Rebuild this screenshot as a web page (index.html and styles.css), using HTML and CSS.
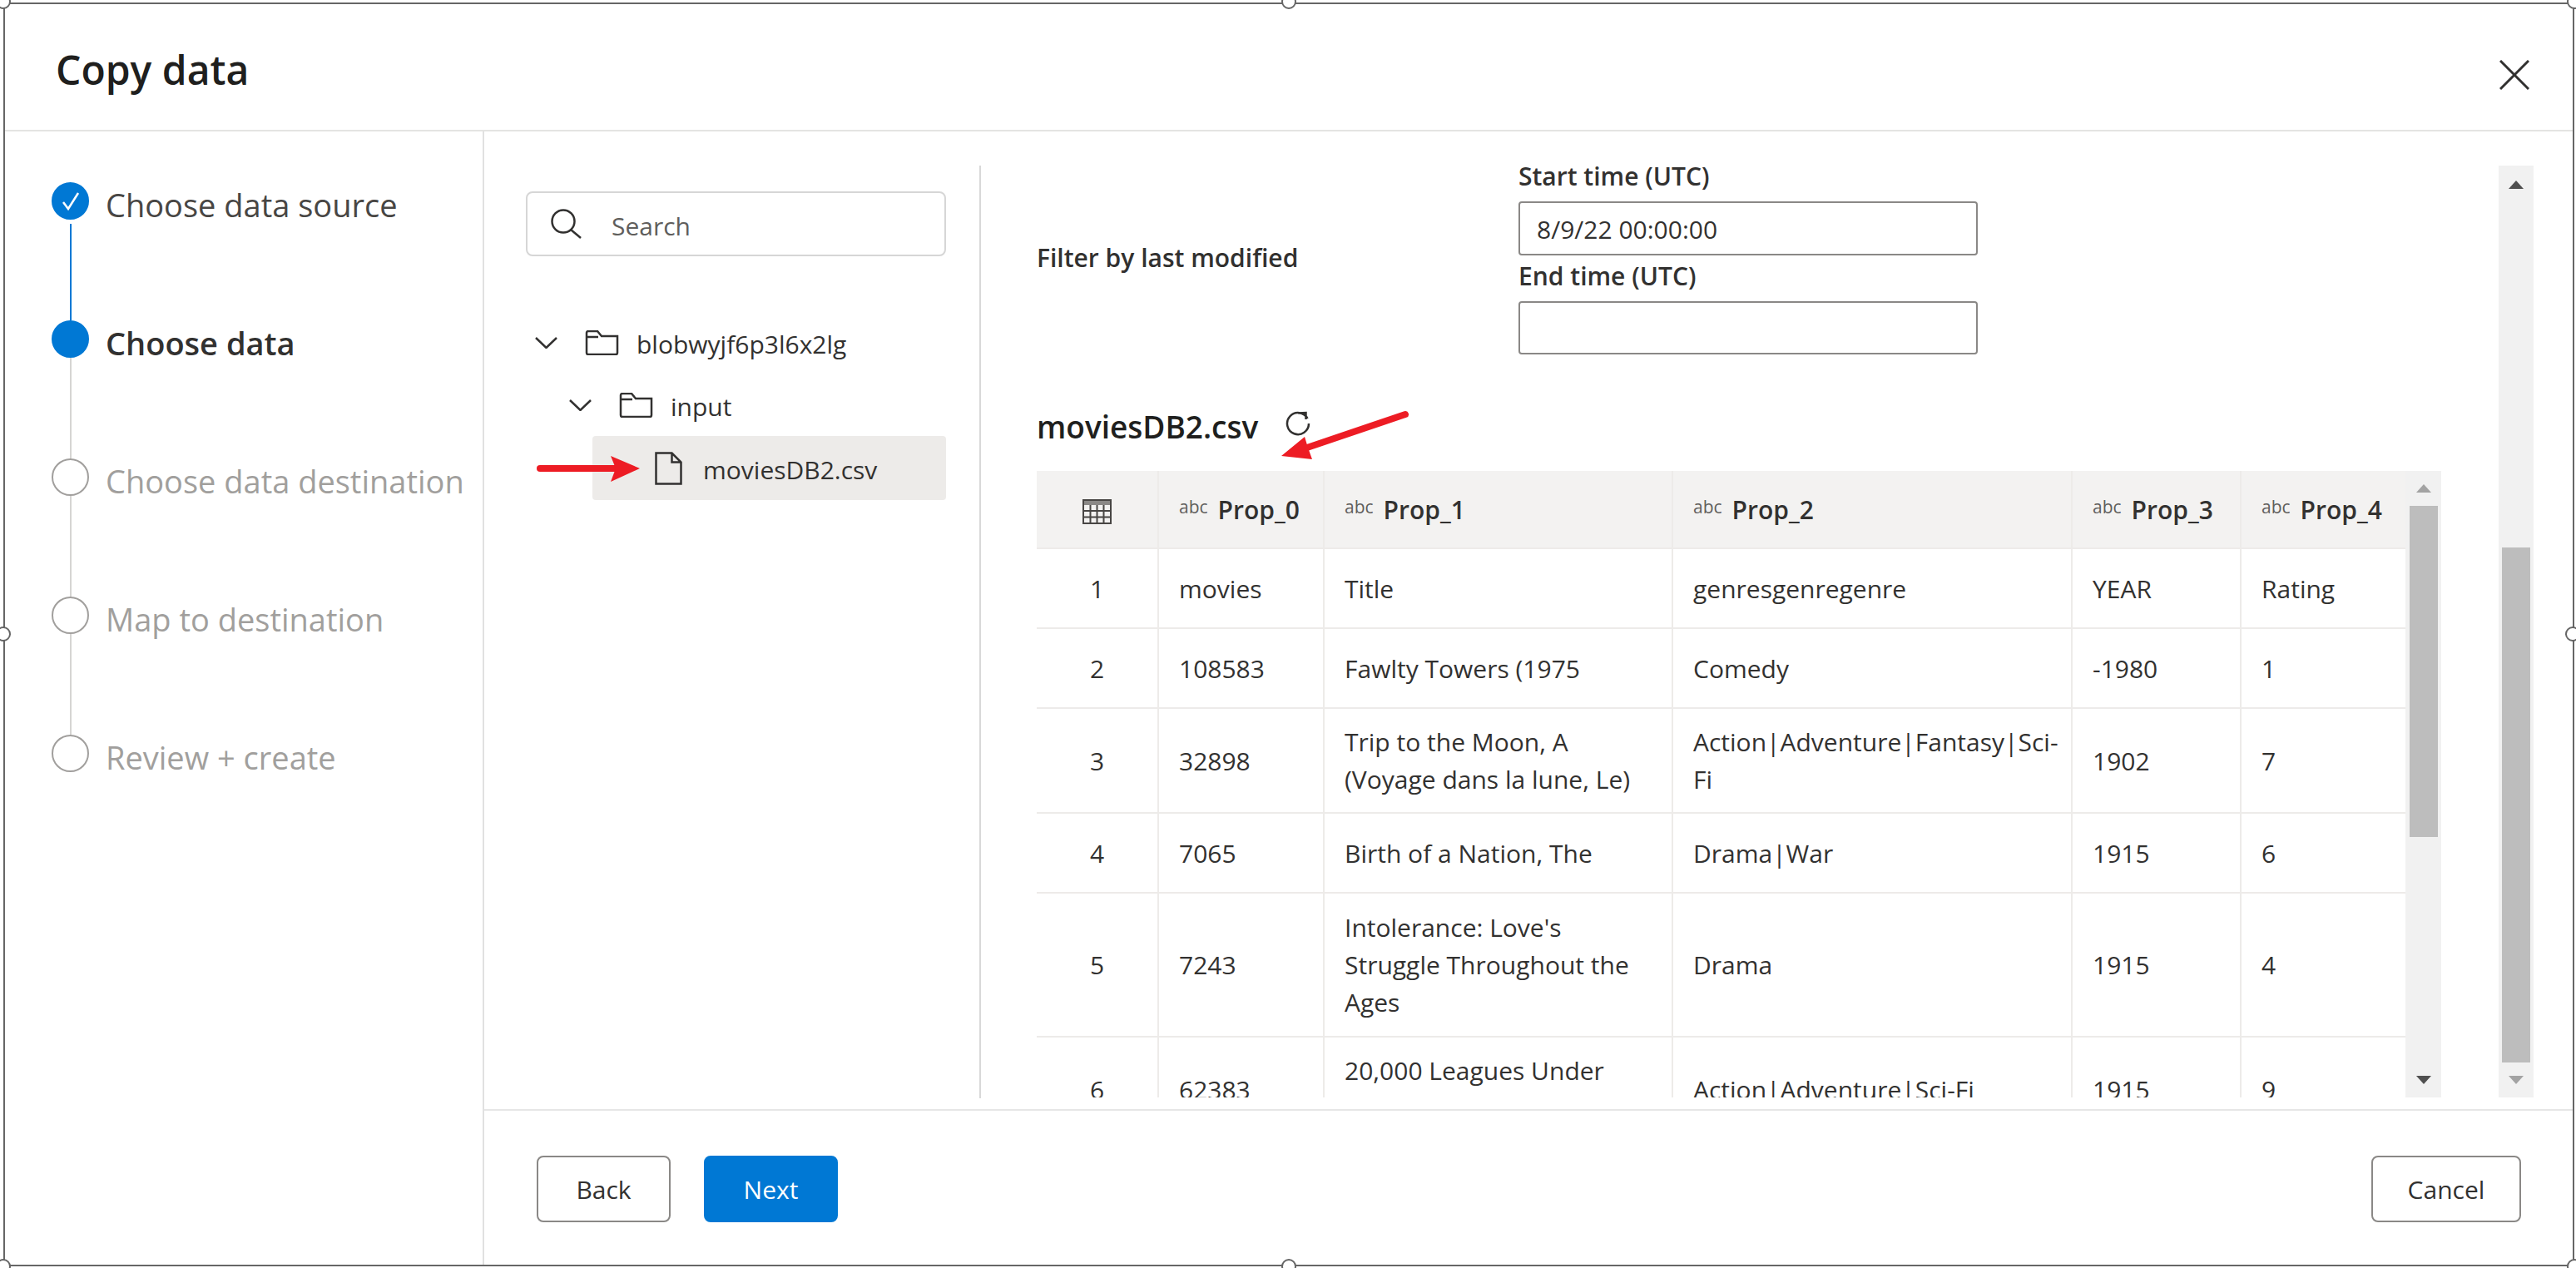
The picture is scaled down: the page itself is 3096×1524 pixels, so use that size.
FILE: index.html
```html
<!DOCTYPE html>
<html>
  <head>
    <meta charset="UTF-8">
    <title>Copy data</title>
    <link rel="stylesheet" href="styles.css">
  </head>
  <body>
    <div class="dialog">
      <div class="dialog-header">
        <h1>Copy data</h1>
        <svg class="close-icon" viewBox="0 0 36 36"><path d="M1 1L35 35M35 1L1 35"/></svg>
      </div>

      <div class="dialog-body">
        <!-- Steps -->
        <div class="steps">
          <div class="step done">
            <div class="step-marker">
              <div class="step-circle">
                <svg viewBox="0 0 45 45"><path d="M14 24L20 32L32 13"/></svg>
              </div>
              <div class="step-line"></div>
            </div>
            <div class="step-label">Choose data source</div>
          </div>
          <div class="step current">
            <div class="step-marker">
              <div class="step-circle"></div>
              <div class="step-line"></div>
            </div>
            <div class="step-label">Choose data</div>
          </div>
          <div class="step">
            <div class="step-marker">
              <div class="step-circle"></div>
              <div class="step-line"></div>
            </div>
            <div class="step-label">Choose data destination</div>
          </div>
          <div class="step">
            <div class="step-marker">
              <div class="step-circle"></div>
              <div class="step-line"></div>
            </div>
            <div class="step-label">Map to destination</div>
          </div>
          <div class="step">
            <div class="step-marker">
              <div class="step-circle"></div>
            </div>
            <div class="step-label">Review + create</div>
          </div>
        </div>

        <div class="main">
          <div class="content">
            <!-- Tree -->
            <div class="tree-pane">
              <div class="search-box">
                <svg class="search-icon" viewBox="0 0 38 36"><circle cx="16" cy="15" r="13.5"/><path d="M25 25L37 35"/></svg>
                <span>Search</span>
              </div>
              <div class="tree">
                <div class="tree-row">
                  <svg class="chevron" viewBox="0 0 27 14"><path d="M1 1L13.5 13L26 1"/></svg>
                  <svg class="folder" viewBox="0 0 41 30"><path d="M2 27V3a2 2 0 0 1 2-2h11l5 6h19v20a2 2 0 0 1-2 2H4a2 2 0 0 1-2-2zM2 8h14"/></svg>
                  <span>blobwyjf6p3l6x2lg</span>
                </div>
                <div class="tree-row nested">
                  <svg class="chevron" viewBox="0 0 27 14"><path d="M1 1L13.5 13L26 1"/></svg>
                  <svg class="folder" viewBox="0 0 41 30"><path d="M2 27V3a2 2 0 0 1 2-2h11l5 6h19v20a2 2 0 0 1-2 2H4a2 2 0 0 1-2-2zM2 8h14"/></svg>
                  <span>input</span>
                </div>
                <div class="tree-row selected">
                  <svg class="file" viewBox="0 0 33 40"><path d="M1.5 1.5h19l11 11v26h-30zM20.5 1.5v11h11"/></svg>
                  <span>moviesDB2.csv</span>
                </div>
              </div>
            </div>

            <!-- Preview -->
            <div class="preview">
              <div class="filter-row">
                <div class="filter-label">Filter by last modified</div>
                <div class="filter-fields">
                  <label>Start time (UTC)</label>
                  <div class="text-field">8/9/22 00:00:00</div>
                  <label>End time (UTC)</label>
                  <div class="text-field"></div>
                </div>
              </div>

              <div class="file-title">
                <h2>moviesDB2.csv</h2>
                <svg class="refresh-icon" viewBox="0 0 30 30"><path d="M26.5 9A13 13 0 1 0 28 15M15 2.5L24.5 2V10"/></svg>
              </div>

              <div class="table-area">
                <div class="table-wrap">
                  <table>
                    <colgroup>
                      <col class="col-index">
                      <col class="col-0">
                      <col class="col-1">
                      <col class="col-2">
                      <col class="col-3">
                      <col class="col-4">
                    </colgroup>
                    <thead>
                      <tr>
                        <th class="index">
                          <svg class="table-icon" viewBox="0 0 35 30"><path class="table-band" d="M1 1h33v6H1z"/><path d="M1 1h33v28H1zM1 14h33M1 21.500h33M9.500 7v22M17.500 7v22M25.500 7v22"/></svg>
                        </th>
                        <th><span class="type">abc</span>Prop_0</th>
                        <th><span class="type">abc</span>Prop_1</th>
                        <th><span class="type">abc</span>Prop_2</th>
                        <th><span class="type">abc</span>Prop_3</th>
                        <th><span class="type">abc</span>Prop_4</th>
                      </tr>
                    </thead>
                    <tbody>
                      <tr class="row-short">
                        <td class="index">1</td><td>movies</td><td>Title</td><td>genresgenregenre</td><td>YEAR</td><td>Rating</td>
                      </tr>
                      <tr class="row-short">
                        <td class="index">2</td><td>108583</td><td>Fawlty Towers (1975</td><td>Comedy</td><td>-1980</td><td>1</td>
                      </tr>
                      <tr class="row-double">
                        <td class="index">3</td><td>32898</td><td>Trip to the Moon, A<br>(Voyage dans la lune, Le)</td><td>Action|Adventure|Fantasy|Sci-<br>Fi</td><td>1902</td><td>7</td>
                      </tr>
                      <tr class="row-short">
                        <td class="index">4</td><td>7065</td><td>Birth of a Nation, The</td><td>Drama|War</td><td>1915</td><td>6</td>
                      </tr>
                      <tr class="row-triple">
                        <td class="index">5</td><td>7243</td><td>Intolerance: Love's<br>Struggle Throughout the<br>Ages</td><td>Drama</td><td>1915</td><td>4</td>
                      </tr>
                      <tr class="row-double">
                        <td class="index">6</td><td>62383</td><td>20,000 Leagues Under<br>the Sea</td><td>Action|Adventure|Sci-Fi</td><td>1915</td><td>9</td>
                      </tr>
                    </tbody>
                  </table>
                </div>
                <div class="scrollbar inner">
                  <div class="scroll-btn"><div class="arrow-up faded"></div></div>
                  <div class="scroll-thumb"></div>
                  <div class="scroll-space"></div>
                  <div class="scroll-btn"><div class="arrow-down"></div></div>
                </div>
              </div>
            </div>

            <div class="scrollbar outer">
              <div class="scroll-btn"><div class="arrow-up"></div></div>
              <div class="scroll-thumb"></div>
              <div class="scroll-btn"><div class="arrow-down faded"></div></div>
            </div>
          </div>

          <div class="dialog-footer">
            <button class="btn">Back</button>
            <button class="btn primary">Next</button>
            <button class="btn cancel">Cancel</button>
          </div>
        </div>
      </div>
    </div>

    <!-- Annotations and resize handles drawn over the dialog -->
    <svg class="overlay" viewBox="0 0 3096 1524">
      <path class="arrow-shaft" d="M649 563H740"/>
      <path class="arrow-head" d="M734 548L769 563L734 579L740 563z"/>
      <path class="arrow-shaft" d="M1689 498L1568 539"/>
      <path class="arrow-head" d="M1568 525L1540 548L1577 552L1572 538z"/>
      <circle class="handle" cx="4" cy="2" r="8"/>
      <circle class="handle" cx="1549" cy="2" r="8"/>
      <circle class="handle" cx="3094" cy="2" r="8"/>
      <circle class="handle" cx="4" cy="762" r="8"/>
      <circle class="handle" cx="3092" cy="762" r="8"/>
      <circle class="handle" cx="4" cy="1522" r="8"/>
      <circle class="handle" cx="1549" cy="1522" r="8"/>
      <circle class="handle" cx="3094" cy="1522" r="8"/>
    </svg>
  </body>
</html>
```

FILE: styles.css
```css
* {
  box-sizing: border-box;
}

body {
  margin: 0;
  width: 3096px;
  height: 1524px;
  overflow: hidden;
  position: relative;
  background-color: white;
  font-family: "Open Sans", "Noto Sans", sans-serif;
  font-size: 30px;
  color: #323130;
}

svg {
  fill: none;
  stroke: #323130;
  stroke-width: 2.5;
  flex-shrink: 0;
}

/* Dialog frame */
.dialog {
  margin: 3px 2px 2px 4px;
  width: 3090px;
  height: 1519px;
  border: 2px solid #666;
  display: flex;
  flex-direction: column;
}

.dialog-header {
  height: 153px;
  flex-shrink: 0;
  border-bottom: 2px solid #e4e4e2;
  display: flex;
  align-items: center;
  justify-content: space-between;
  padding: 6px 52px 0 61px;
}

.dialog-header h1 {
  margin: 0;
  font-size: 48px;
  font-weight: 600;
  color: #201f1e;
}

.close-icon {
  width: 36px;
  height: 36px;
  margin-top: 13px;
  stroke-width: 3;
}

.dialog-body {
  flex: 1;
  display: flex;
  min-height: 0;
}

/* Steps */
.steps {
  width: 576px;
  flex-shrink: 0;
  border-right: 2px solid #e1e1e1;
  padding: 61px 0 0 56px;
}

.step {
  height: 166px;
  display: flex;
  font-size: 38px;
  color: #a19f9d;
}

.step-marker {
  width: 45px;
  display: flex;
  flex-direction: column;
  align-items: center;
}

.step-circle {
  width: 45px;
  height: 45px;
  flex-shrink: 0;
  border-radius: 50%;
  border: 2px solid #a19f9d;
}

.step-circle svg {
  display: block;
  width: 45px;
  height: 45px;
  margin: -2px;
  stroke: white;
}

.step-line {
  flex: 1;
  width: 2px;
  background-color: #d6d5d3;
}

.step-label {
  margin-left: 20px;
  line-height: 54px;
  white-space: nowrap;
}

.step.done,
.step.current {
  color: #323130;
}

.step.done {
  color: #484644;
}

.step.current .step-label {
  font-weight: 600;
}

.step.done .step-circle,
.step.current .step-circle {
  background-color: #0078d4;
  border-color: #0078d4;
}

.step.done .step-line {
  margin-top: 5px;
  background-color: #0078d4;
}

/* Right side */
.main {
  flex: 1;
  min-width: 0;
  display: flex;
  flex-direction: column;
}

.content {
  height: 1175px;
  display: flex;
  align-items: flex-start;
}

.tree-pane {
  width: 597px;
  height: 1121px;
  margin-top: 41px;
  flex-shrink: 0;
  border-right: 2px solid #d8d8d8;
  padding: 31px 40px 0 50px;
}

.search-box {
  height: 78px;
  border: 2px solid #d6d6d6;
  border-radius: 8px;
  display: flex;
  align-items: center;
  padding-left: 27px;
  color: #605e5c;
}

.search-box span {
  margin-top: 4px;
}

.search-icon {
  width: 38px;
  height: 36px;
  margin-right: 36px;
}

/* Tree */
.tree {
  margin-top: 66px;
}

.tree-row {
  height: 75px;
  display: flex;
  align-items: center;
  padding-left: 11px;
  white-space: nowrap;
}

.tree-row span {
  margin-top: 4px;
}

.tree-row.nested {
  padding-left: 52px;
}

.tree-row.selected {
  height: 77px;
  margin-left: 80px;
  padding-left: 75px;
  background-color: #edebe9;
  border-radius: 4px;
}

.chevron {
  width: 27px;
  height: 14px;
  margin-right: 33px;
}

.folder {
  width: 41px;
  height: 30px;
  margin-right: 21px;
}

.file {
  width: 33px;
  height: 40px;
  margin-right: 25px;
}

/* Filter form */
.preview {
  width: 1824px;
  height: 1162px;
  flex-shrink: 0;
  padding: 34px 69px 0 67px;
  overflow: hidden;
}

.filter-row {
  display: flex;
  align-items: center;
}

.filter-label {
  width: 579px;
  font-weight: 600;
}

.filter-fields {
  width: 552px;
}

.filter-fields label {
  display: block;
  height: 40px;
  line-height: 40px;
  margin-bottom: 10px;
  font-weight: 600;
}

.text-field {
  height: 65px;
  margin-bottom: 5px;
  border: 2px solid #8a8886;
  border-radius: 4px;
  padding-left: 20px;
  line-height: 63px;
}

.text-field:last-child {
  height: 64px;
  margin-bottom: 0;
}

.file-title {
  height: 50px;
  margin-top: 64px;
  display: flex;
  align-items: center;
}

.file-title h2 {
  margin: -6px 0 0;
  font-size: 37px;
  font-weight: 600;
  color: #201f1e;
}

.refresh-icon {
  width: 30px;
  height: 30px;
  margin: -12px 0 0 33px;
}

/* Table */
.table-area {
  margin-top: 26px;
  height: 753px;
  display: flex;
}

.table-wrap {
  width: 1645px;
  height: 753px;
  overflow: hidden;
}

table {
  border-collapse: collapse;
  table-layout: fixed;
  width: 1645px;
}

.col-index { width: 146px; }
.col-0 { width: 199px; }
.col-1 { width: 419px; }
.col-2 { width: 480px; }
.col-3 { width: 203px; }
.col-4 { width: 198px; }

th, td {
  text-align: left;
  padding: 0 0 0 24px;
  line-height: 45px;
  border-right: 2px solid #edebe9;
  border-bottom: 2px solid #edebe9;
  white-space: nowrap;
}

th:last-child, td:last-child {
  border-right: none;
}

th {
  height: 93px;
  padding-top: 4px;
  background-color: #f3f2f1;
  font-weight: 600;
}

th.index {
  padding-top: 0;
}

th.index, td.index {
  padding-left: 0;
  text-align: center;
}

.row-short { height: 96px; }
.row-double { height: 126px; }
.row-triple { height: 173px; }

.type {
  font-size: 21px;
  font-weight: 400;
  color: #605e5c;
  margin-right: 12px;
  position: relative;
  top: -7px;
}

.table-icon {
  width: 35px;
  height: 30px;
  stroke-width: 2;
  stroke: #484644;
  vertical-align: middle;
}

.table-band {
  fill: #8a8886;
  stroke: none;
}

/* Scrollbars */
.scrollbar {
  display: flex;
  flex-direction: column;
  align-items: center;
  background-color: #f1f1f1;
  flex-shrink: 0;
}

.scrollbar.inner {
  width: 43px;
  height: 753px;
}

.scrollbar.outer {
  width: 42px;
  height: 1120px;
  margin-top: 41px;
}

.scroll-thumb {
  width: 34px;
  flex-shrink: 0;
  background-color: #bdbdbd;
}

.inner .scroll-thumb {
  height: 398px;
}

.outer .scroll-thumb {
  height: 619px;
  margin-top: 414px;
}

.scroll-space {
  flex: 1;
}

.scroll-btn {
  width: 100%;
  height: 42px;
  display: flex;
  align-items: center;
  justify-content: center;
}

.outer .scroll-btn:first-child {
  height: 46px;
}

.arrow-up, .arrow-down {
  width: 0;
  height: 0;
  border-left: 9px solid transparent;
  border-right: 9px solid transparent;
}

.arrow-up {
  border-bottom: 10px solid #505050;
}

.arrow-down {
  border-top: 10px solid #505050;
}

.arrow-up.faded {
  border-bottom-color: #a3a3a3;
}

.arrow-down.faded {
  border-top-color: #a3a3a3;
}

/* Footer */
.dialog-footer {
  flex: 1;
  border-top: 2px solid #e6e6e6;
  display: flex;
  align-items: flex-start;
  padding: 54px 62px 0 63px;
}

.btn {
  width: 161px;
  height: 80px;
  margin-right: 40px;
  background-color: white;
  border: 2px solid #8a8886;
  border-radius: 8px;
  font-family: inherit;
  font-size: 30px;
  color: #323130;
  cursor: pointer;
}

.btn.primary {
  background-color: #0078d4;
  border-color: #0078d4;
  color: white;
}

.btn.cancel {
  width: 180px;
  margin-left: auto;
  margin-right: 0;
}

/* Overlay */
.overlay {
  position: absolute;
  left: 0;
  top: 0;
  width: 3096px;
  height: 1524px;
  pointer-events: none;
  stroke: none;
}

.arrow-shaft {
  stroke: #ed1c24;
  stroke-width: 8;
  stroke-linecap: round;
}

.arrow-head {
  fill: #ed1c24;
}

.handle {
  fill: white;
  stroke: #666;
  stroke-width: 2;
}
```
